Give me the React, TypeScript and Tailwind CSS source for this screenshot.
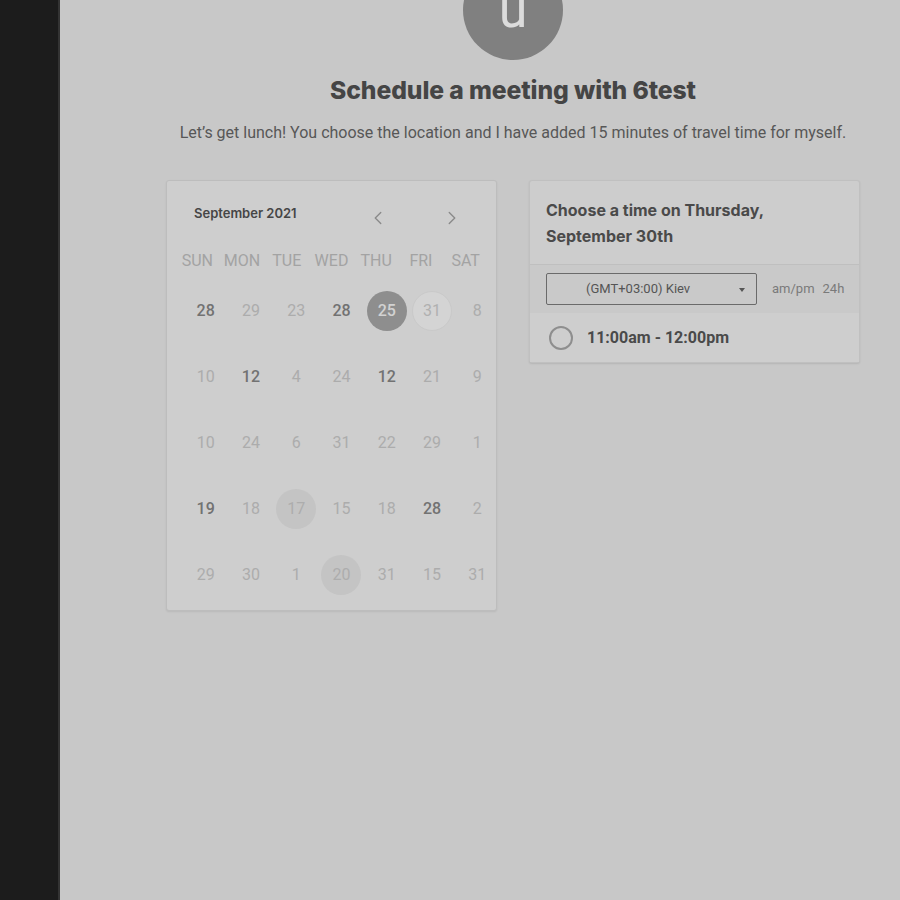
import { ChevronLeft, ChevronRight } from "lucide-react";

type Day = { n: number; kind: "dark" | "light" | "selected" | "ring" | "soft" };

const WEEKDAYS = ["SUN", "MON", "TUE", "WED", "THU", "FRI", "SAT"];

const d = (n: number, kind: Day["kind"] = "light"): Day => ({ n, kind });

const WEEKS: Day[][] = [
  [d(28, "dark"), d(29), d(23), d(28, "dark"), d(25, "selected"), d(31, "ring"), d(8)],
  [d(10), d(12, "dark"), d(4), d(24), d(12, "dark"), d(21), d(9)],
  [d(10), d(24), d(6), d(31), d(22), d(29), d(1)],
  [d(19, "dark"), d(18), d(17, "soft"), d(15), d(18), d(28, "dark"), d(2)],
  [d(29), d(30), d(1), d(20, "soft"), d(31), d(15), d(31)],
];

function DayCell({ day }: { day: Day }) {
  if (day.kind === "selected") {
    return (
      <div className="w-10 h-10 rounded-full bg-[#8e8e8e] flex items-center justify-center text-[#d2d2d2] text-[16px] font-medium">
        {day.n}
      </div>
    );
  }
  if (day.kind === "ring") {
    return (
      <div className="w-10 h-10 rounded-full bg-[#d4d4d4] border border-[#c9c9c9] flex items-center justify-center text-[#b0b0b0] text-[16px]">
        {day.n}
      </div>
    );
  }
  if (day.kind === "soft") {
    return (
      <div className="w-10 h-10 rounded-full bg-[#c4c4c4] flex items-center justify-center text-[#adadad] text-[16px]">
        {day.n}
      </div>
    );
  }
  return (
    <span className={day.kind === "dark" ? "text-[#727272] text-[16px] font-medium" : "text-[#acacac] text-[16px]"}>
      {day.n}
    </span>
  );
}

function Calendar() {
  return (
    <div
      className="w-[331px] bg-[#cecece] border border-[#bdbdbd] rounded-[3px] shadow-[0_1px_2px_rgba(0,0,0,0.08)] pt-[22px] pb-[2px]"
      style={{ fontFamily: "Roboto, sans-serif" }}
    >
      <div className="flex items-center h-[22px] pl-[27px] pr-[33px]">
        <span className="text-[#464646] text-[13px] font-semibold" style={{ fontFamily: "Inter, sans-serif" }}>
          September 2021
        </span>
        <div className="ml-auto flex items-center gap-[52px] mt-[8px]">
          <ChevronLeft size={22} strokeWidth={1.5} className="text-[#8a8a8a]" />
          <ChevronRight size={22} strokeWidth={1.5} className="text-[#8a8a8a]" />
        </div>
      </div>

      <div className="grid grid-cols-7 px-[8px] mt-[24px] h-[24px] items-center">
        {WEEKDAYS.map((w) => (
          <span key={w} className="text-center text-[16px] text-[#a3a3a3]">
            {w}
          </span>
        ))}
      </div>

      <div className="mt-[5px] pl-[16px] w-[333px]">
        {WEEKS.map((week, i) => (
          <div key={i} className="grid grid-cols-7 h-[66px]">
            {week.map((day, j) => (
              <div key={j} className="flex items-center justify-center">
                <DayCell day={day} />
              </div>
            ))}
          </div>
        ))}
      </div>
    </div>
  );
}

function TimePanel() {
  return (
    <div
      className="w-[331px] bg-[#cdcdcd] border border-[#c0c0c0] rounded-[3px] shadow-[0_1px_2px_rgba(0,0,0,0.1)]"
      style={{ fontFamily: "Roboto, sans-serif" }}
    >
      <div className="px-[16px] pt-[16px] pb-[15px] border-b border-[#bfbfbf]">
        <h3
          className="text-[#4a4a4a] text-[16px] font-bold leading-[26px]"
          style={{ fontFamily: "Inter, sans-serif" }}
        >
          Choose a time on Thursday,
          <br />
          September 30th
        </h3>
      </div>
      <div className="flex items-center bg-[#c9c9c9] pl-[16px] py-[8px]">
        <div className="relative w-[211px] h-[32px] border border-[#6a6a6a] rounded-[2px] flex items-center pl-[39px] text-[13px] text-[#555]">
          (GMT+03:00) Kiev
          <span className="absolute right-[11px] top-[14px] w-0 h-0 border-l-[3.5px] border-r-[3.5px] border-t-[4px] border-l-transparent border-r-transparent border-t-[#555]" />
        </div>
        <div className="ml-[15px] flex gap-[8px] text-[13px] text-[#7a7a7a]">
          <span>am/pm</span>
          <span>24h</span>
        </div>
      </div>
      <div className="flex items-center h-[49px] pl-[19px] bg-[#cecece]">
        <span className="w-[24px] h-[24px] rounded-full border-2 border-[#8e8e8e]" />
        <span className="ml-[14px] text-[16px] font-bold text-[#4a4a4a]">11:00am - 12:00pm</span>
      </div>
    </div>
  );
}

export default function App() {
  return (
    <div className="flex min-h-screen bg-[#c8c8c8] overflow-hidden">
      <div className="w-[60px] shrink-0 bg-[#1c1c1c] border-r-2 border-[#333]" />
      <main className="flex-1 flex flex-col items-center pl-[66px]">
        <div className="-mt-[40px] w-[100px] h-[100px] rounded-full bg-[#808080] flex items-center justify-center">
          <span className="text-[#dcdcdc] text-[52px] leading-none" style={{ fontFamily: "Roboto, sans-serif" }}>
            u
          </span>
        </div>
        <h1
          className="mt-[14px] text-[24.7px] leading-[32px] font-extrabold text-[#454545] tracking-[-0.1px]"
          style={{ fontFamily: "Inter, sans-serif" }}
        >
          Schedule a meeting with 6test
        </h1>
        <p
          className="mt-[15px] text-[16px] leading-[24px] text-[#575757]"
          style={{ fontFamily: "Roboto, sans-serif" }}
        >
          Let’s get lunch! You choose the location and I have added 15 minutes of travel time for myself.
        </p>
        <div className="mt-[35px] flex items-start gap-[32px]">
          <Calendar />
          <TimePanel />
        </div>
      </main>
    </div>
  );
}
